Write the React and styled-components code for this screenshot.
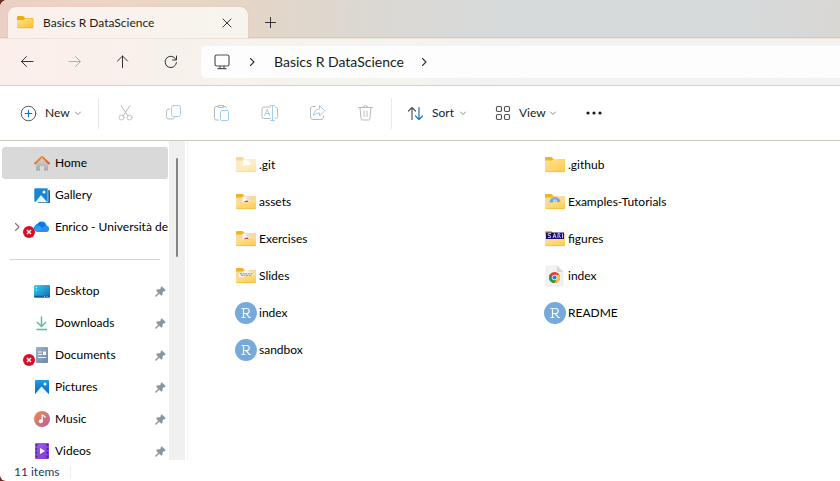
import React from "react";
import styled, { createGlobalStyle } from "styled-components";

const GlobalStyle = createGlobalStyle`
  * { box-sizing: border-box; }
  body { margin: 0; background: #6b2a1c; }
  button, input { font: inherit; color: inherit; }
`;

const Window = styled.div`
  display: flex;
  flex-direction: column;
  height: 100vh;
  overflow: hidden;
  background: #fff;
  border-radius: 7px 0 0 6px;
  color: #1b1b1b;
  font: 12px/16px Lato, "Open Sans", sans-serif;
`;

const IconButton = styled.button`
  display: flex;
  align-items: center;
  justify-content: center;
  flex: none;
  width: ${(p) => p.$w || 48}px;
  height: 32px;
  padding: 0;
  border: 0;
  background: none;
`;

/* Title bar */
const TabStrip = styled.header`
  display: flex;
  align-items: flex-end;
  flex: none;
  height: 38px;
  padding-left: 8px;
  background: linear-gradient(97deg, #eccfc4 0%, #ecd6c5 15%, #e6d5c5 27%, #dcd8d1 42%, #d6dadc 62%, #d6dada 88%, #d9d7d4 100%);
  box-shadow: inset 0 -1px #0000000d;
`;

const Tab = styled.div`
  display: flex;
  align-items: center;
  width: 240px;
  height: 31px;
  padding: 0 4px 0 9px;
  border-radius: 8px 8px 0 0;
  background: linear-gradient(90deg, #fbf1ec, #f7f4ee);
  box-shadow: 0 0 1px #0000002e;
`;

const TabTitle = styled.span`
  flex: 1;
  margin-left: 9px;
  white-space: nowrap;
`;

/* Address row */
const NavBar = styled.nav`
  display: flex;
  align-items: center;
  flex: none;
  height: 48px;
  padding-left: 3px;
  border-top: 1px solid #eee3d9;
  border-bottom: 1px solid #d2d0ce;
  background: linear-gradient(95deg, #fcefeb 0%, #f8f1eb 18%, #f5f3ed 36%, #f1f3f3 64%, #f1f3f2 88%, #f4f2f0 100%);
`;

const AddressBar = styled.div`
  display: flex;
  align-items: center;
  flex: 1;
  height: 32px;
  margin-left: 6px;
  padding-left: 13px;
  border-radius: 5px 0 0 5px;
  background: #fcfdfc;
`;

const Crumb = styled.button`
  padding: 0;
  border: 0;
  margin: 0 16px 0 18px;
  background: none;
  font-size: 14px;
  line-height: 20px;
  white-space: nowrap;
`;

const CrumbArrow = styled.span`
  display: flex;
  margin-left: ${(p) => p.$gap || 0}px;
`;

/* Commands */
const Toolbar = styled.div`
  display: flex;
  align-items: center;
  flex: none;
  height: 55px;
  border-bottom: 1px solid #cdc9bd;
`;

const Command = styled.button`
  display: flex;
  align-items: center;
  flex: none;
  width: ${(p) => p.$w}px;
  height: 32px;
  padding: 0 0 0 ${(p) => p.$pad}px;
  border: 0;
  background: none;
`;

const CommandLabel = styled.span`
  flex: none;
  width: ${(p) => p.$w}px;
  margin-left: 8px;
  text-align: left;
`;

const Separator = styled.span`
  flex: none;
  width: 1px;
  height: 31px;
  margin: 0 3px 0 1px;
  background: #e9e9e9;
`;

/* Body */
const Body = styled.div`
  display: flex;
  flex: 1;
  min-height: 0;
`;

const Sidebar = styled.aside`
  flex: none;
  width: 169px;
  padding-top: 6px;
  overflow: hidden;
  color: #000;
`;

const PlaceList = styled.ul`
  margin: 0;
  padding: 0 1px 0 2px;
  list-style: none;
`;

const Place = styled.a`
  display: flex;
  align-items: center;
  position: relative;
  height: 32px;
  padding-left: 32px;
  border-radius: 3px;
  background: ${(p) => (p.$active ? "#d9d9d9" : "transparent")};
  color: inherit;
  text-decoration: none;
`;

const PlaceName = styled.span`
  flex: 1;
  margin-left: 5px;
  white-space: nowrap;
`;

const Pin = styled.span`
  display: flex;
  margin-right: 2px;
`;

const Expander = styled.span`
  position: absolute;
  left: 11px;
  display: flex;
`;

const ErrorBadge = styled.span`
  position: absolute;
  left: 21px;
  top: 15px;
  display: flex;
`;

const Divider = styled.hr`
  margin: 16px 9px 15px 10px;
  border: 0;
  border-top: 1px solid #d2d2d2;
`;

const ScrollTrack = styled.div`
  flex: none;
  width: 16px;
  padding: 17px 7px 0;
  background: #f0f0f0;
`;

const ScrollThumb = styled.div`
  height: 99px;
  border-radius: 1px;
  background: #858585;
`;

const Files = styled.main`
  flex: 1;
  margin-left: 2px;
  padding: 5px 0 0 34px;
  border-left: 1px solid #f5f5f5;
  color: #000;
`;

const FileGrid = styled.ul`
  display: grid;
  grid-template-columns: repeat(2, 309px);
  grid-auto-rows: 37px;
  margin: 0;
  padding: 0;
  list-style: none;
`;

const FileLink = styled.a`
  display: flex;
  align-items: center;
  gap: 2px;
  height: 37px;
  padding-left: 13px;
  color: inherit;
  text-decoration: none;
`;

const StatusBar = styled.footer`
  display: flex;
  align-items: center;
  flex: none;
  height: 21px;
  padding: 2px 0 0 14px;
  color: #1e395b;
`;

const StatusMark = styled.span`
  width: 1px;
  height: 12px;
  margin-left: 10px;
  background: #eee;
`;

/* Icons */
const Line = ({ w = 16, h = w, box, color = "#333", sw = 1, children }) => (
  <svg width={w} height={h} viewBox={box || `0 0 ${w} ${h}`} fill="none" stroke={color} strokeWidth={sw} strokeLinecap="round" strokeLinejoin="round" aria-hidden="true">
    {children}
  </svg>
);

const GREY = "#b9b9b9";
const BLUE = "#9fcdf0";

const Chevron = () => <Line w={8} color="#8b8b8b"><path d="M1.500 3 4 5.500l2.500-2.500" /></Line>;
const RightChevron = ({ color = "#333" }) => <Line w={8} h={12} color={color} sw={1.1}><path d="m2.500 2.500 3.500 3.500-3.500 3.500" /></Line>;

const TabFolder = () => (
  <svg width="17" height="16" viewBox="0 0 17 16" aria-hidden="true">
    <defs><linearGradient id="tabFolder" x2="1" y2="1"><stop stopColor="#ffe28c" /><stop offset="1" stopColor="#fbc22d" /></linearGradient></defs>
    <path d="M0 2q0-1 1-1h5l2 2h7.500q1 0 1 1v4H0z" fill="#eeaa0c" />
    <path d="M0 5h6l2-1.500h7.500q1 0 1 1V12q0 1-1 1H1q-1 0-1-1z" fill="url(#tabFolder)" />
    <path d="M.5 12.800h15.500" stroke="#e4a51d" strokeWidth=".6" />
  </svg>
);

const previews = {
  page: <><path d="M7 4.500h5l2 2V12H7z" fill="#fff" /><path d="M12 4.500v2h2" stroke="#ccd5e2" strokeWidth=".7" fill="none" /></>,
  red: <><path d="M6.500 4.500H11l2.500 2.500v5h-7z" fill="#fbfafa" /><path d="M11 4.500v2.500h2.500" stroke="#b8bdc6" strokeWidth=".7" fill="none" /><path d="M7.500 10.300q2.500-2.600 5.500-1.300-2 2.500-5.500 1.300z" fill="#db3c39" /></>,
  slides: <><path d="M3 8l5-3 2-1.500L17 8v4H3z" fill="#f8f7f4" /><path d="M4 7.800h13M5 9.300h11" stroke="#8a8b8e" strokeWidth="1" strokeDasharray="2 .6" /></>,
  arc: <><path d="M4.500 10.500a5.500 5.500 0 0 1 11 0z" fill="#72a9df" /><path d="M8.500 8h2a1 1 0 0 1 0 2H9M9 8v2.500" stroke="#d9eafa" fill="none" /></>,
  sar: <><path d="M1 3.500h18v6.500H1z" fill="#160d7b" /><path d="M6 4.500H3.500L3 6l2.500.8V8.500H3M8 9l1.500-4.500L11 9M8.500 7.300h2M13 9V4.500h1.500q1 1-.3 2.200L15.500 9M17.500 4.500V9" stroke="#c9c2dd" fill="none" /></>,
};

const Folder = ({ preview, faded }) => (
  <svg width="22" height="20" viewBox="-1 0 22 20" opacity={faded ? 0.5 : 1} aria-hidden="true">
    <defs><linearGradient id="folderFront" x2="1" y2="1"><stop stopColor="#ffe394" /><stop offset="1" stopColor="#fdcb4d" /></linearGradient></defs>
    <path d="M0 3q0-1 1-1h5.500l2 2H19q1 0 1 1v7H0z" fill="#f3b321" />
    {preview ? <path d="M0 5.500h7L9 4h10q1 0 1 1v8H0z" fill="#f9dc9a" /> : null}
    {previews[preview]}
    {preview ? (
      <path d="M0 11h7.500l2-1H20v6q0 1-1 1H1q-1 0-1-1z" fill="url(#folderFront)" />
    ) : (
      <path d="M0 5.500h7L9 4h10q1 0 1 1v11q0 1-1 1H1q-1 0-1-1z" fill="url(#folderFront)" />
    )}
    <path d="M.5 16.700h19" stroke="#efb43a" strokeWidth=".6" />
  </svg>
);

const RFile = () => (
  <svg width="22" height="22" viewBox="0 0 22 22" aria-hidden="true">
    <circle cx="11" cy="11" r="11" fill="#75aadb" />
    <path d="M6.500 6.500h5.200a2.500 2.500 0 0 1 0 5H8.500M8.500 6.500v9M6.500 15.500h4M11 11.500l3.300 4h1.700" fill="none" stroke="#f5f9fd" strokeWidth="1.200" />
  </svg>
);

const ChromeFile = () => (
  <svg width="22" height="22" viewBox="0 0 22 22" aria-hidden="true">
    <path d="M3 1h11l5 5v14q0 1-1 1H3q-1 0-1-1V2q0-1 1-1z" fill="#f3f3f3" stroke="#e4e4e4" strokeWidth=".6" />
    <path d="M13 1v5q0 1 1 1h5z" fill="#d7d7d7" />
    <circle cx="10.500" cy="12.500" r="5.500" fill="#e33b2e" />
    <path d="M5.740 9.750A5.500 5.500 0 0 0 10.500 18l2.400-4.200-2.400-1.300z" fill="#229a4c" />
    <path d="M10.500 18a5.500 5.500 0 0 0 4.760-8.250H10.500v2.750l2.400 1.300z" fill="#fccb1d" />
    <circle cx="10.500" cy="12.500" r="2.700" fill="#fff" />
    <circle cx="10.500" cy="12.500" r="2.100" fill="#3079e6" />
  </svg>
);

const PinIcon = () => (
  <svg width="11" height="11" viewBox="0 0 11 11" aria-hidden="true">
    <path d="M6.800.4 10.600 4.200 9.600 5l-.8-.1-1.500 1.600v2.300l-1 .8-2.100-2.200L1.200 10.300.2 10.600.6 9.600 3.400 6.700 1.300 4.600l1-1h2.300L6.200 2.100 6 1.200z" fill="#8a949c" stroke="#8a949c" strokeWidth=".4" />
  </svg>
);

const Badge = () => (
  <svg width="12" height="12" viewBox="0 0 12 12" aria-hidden="true">
    <circle cx="6" cy="6" r="6" fill="#d50f26" />
    <path d="m4 4 4 4M8 4 4 8" stroke="#fff" strokeWidth="1.400" />
  </svg>
);

const placeIcons = {
  home: <>
    <defs><linearGradient id="roof" x2="1" y2="1"><stop stopColor="#f5a13a" /><stop offset="1" stopColor="#d95420" /></linearGradient><linearGradient id="walls" x2="0" y2="1"><stop stopColor="#d7d7d7" /><stop offset="1" stopColor="#a8a8a8" /></linearGradient></defs>
    <path d="M2 7.500 8 2l6 5.500V15q0 .8-.8.8H10V11H6v4.800H2.800Q2 15.800 2 15z" fill="url(#walls)" />
    <path d="M1 8.500 8 1.700l7 6.800" fill="none" stroke="url(#roof)" strokeWidth="1.900" strokeLinecap="round" strokeLinejoin="round" />
  </>,
  gallery: <>
    <path d="M4 3h11q1 0 1 1v11q0 1-1 1H4z" fill="#1261ab" />
    <rect width="14" height="14" rx="1" y="1" fill="#1686d4" stroke="#fff" strokeWidth=".6" />
    <path d="M1.500 15 7 8l6 7z" fill="#e9f6ff" /><circle cx="10" cy="5" r="1.500" fill="#fff" />
  </>,
  cloud: <>
    <defs><linearGradient id="cloud" x2="1" y2="1"><stop stopColor="#0b6cd8" /><stop offset=".5" stopColor="#27a7fb" /><stop offset="1" stopColor="#2373ee" /></linearGradient></defs>
    <path d="M3.600 13A3.600 3.600 0 0 1 1 6.800Q2 5 3.700 4.600a5 5 0 0 1 9 1.900A3.400 3.400 0 0 1 13 13z" fill="url(#cloud)" />
    <path d="M5 13l7-6a3.500 3.500 0 0 1 1 6z" fill="#2f8bf8" /><path d="M2 5.500Q5 5 8 9l4-2.500A5 5 0 0 0 3.700 4.600z" fill="#0c76e6" />
  </>,
  desktop: <>
    <defs><linearGradient id="desktop" x2="1" y2="1"><stop stopColor="#3bd4ed" /><stop offset="1" stopColor="#0e65b5" /></linearGradient></defs>
    <rect y="2" width="16" height="12.500" rx="1" fill="url(#desktop)" /><path d="M2 4.500h1M2 7h1" stroke="#c7f6fb" strokeWidth="1.200" /><path d="M0 12.800h16v.7q0 1-1 1H1q-1 0-1-1z" fill="#1659a0" /><path d="M10 13.500h1M12.500 13.500h1" stroke="#91bce2" />
  </>,
  downloads: <path d="M7.500 1.500v9.800M3 7l4.500 4.500L12 7M2.500 14.500h10.500" fill="none" stroke="#54bda1" strokeWidth="1.400" />,
  documents: <>
    <defs><linearGradient id="documents" x2="1" y2="1"><stop stopColor="#9fb2ca" /><stop offset="1" stopColor="#6f87a6" /></linearGradient></defs>
    <rect x="2" y="0" width="12" height="16" rx="1" fill="url(#documents)" /><path d="M4 5h4M4 7.500h4M4 10.500h8" stroke="#eff5fb" strokeWidth="1.200" /><rect x="9" y="4.500" width="3" height="3.500" fill="#fff" />
  </>,
  pictures: <>
    <defs><linearGradient id="pictures" x2="0" y2="1"><stop stopColor="#1b9de4" /><stop offset="1" stopColor="#0d69b9" /></linearGradient></defs>
    <rect x="1" y="1" width="14" height="14" rx="1" fill="url(#pictures)" /><path d="M1.500 14.500 7.500 7.500l6.800 7q-.3.500-.8.500H2z" fill="#ecf7ff" /><circle cx="11" cy="5" r="1.500" fill="#fff" />
  </>,
  music: <>
    <defs><linearGradient id="music" x2="1" y2="1"><stop stopColor="#f18b4d" /><stop offset="1" stopColor="#b4609e" /></linearGradient></defs>
    <circle cx="8" cy="8" r="8" fill="url(#music)" /><circle cx="6.700" cy="10.300" r="2" fill="#fff" /><path d="M8.200 10.500V4l2.800 1.500v1.300" fill="none" stroke="#fff" strokeWidth="1.200" />
  </>,
  videos: <>
    <defs><linearGradient id="videos" x2="1" y2="1"><stop stopColor="#a85cf1" /><stop offset="1" stopColor="#7a3bd1" /></linearGradient></defs>
    <rect x="1" width="14" height="16" rx="1" fill="url(#videos)" /><path d="M2.500 1v15M13.500 1v15" stroke="#4b1f98" strokeWidth="1.600" strokeDasharray="2 1.800" /><path d="m6 5 5 3-5 3z" fill="#fff" />
  </>,
};

const PlaceIcon = ({ name }) => <svg width="16" height="16" viewBox="0 0 16 16" aria-hidden="true">{placeIcons[name]}</svg>;

const tools = [
  ["Cut", <><path d="M4 1.500 11 12M13 1.500 6 12" stroke={GREY} /><circle cx="4.500" cy="13.500" r="2.500" stroke={BLUE} /><circle cx="12.500" cy="13.500" r="2.500" stroke={BLUE} /></>],
  ["Copy", <><path d="M4.500 5H4a2.500 2.500 0 0 0-2.500 2.500v5A2.500 2.500 0 0 0 4 15h3q2 0 2.500-1.500" stroke={GREY} /><rect x="6.500" y="1.500" width="9" height="11" rx="2.200" stroke={BLUE} /></>],
  ["Paste", <><path d="M5 2.500H3A1.500 1.500 0 0 0 1.500 4v10.500A1.500 1.500 0 0 0 3 16h2.500M10 2.500h2q1.500 0 1.500 1.500" stroke={GREY} /><rect x="5" y="1.500" width="6" height="2" rx="1" stroke={GREY} /><rect x="7.500" y="6.500" width="8" height="10" rx="1.200" stroke={BLUE} /></>],
  ["Rename", <><path d="M9.500 3H3A2 2 0 0 0 1 5v7.500a2 2 0 0 0 2 2h6.500M14 3a2 2 0 0 1 2.500 2v7.500a2 2 0 0 1-2.500 2" stroke={GREY} /><path d="M3.500 11.500 6.200 5.500l2.700 6M4.500 9.500h3.500M11.500 1.500v15M9.500 1.500h4M9.500 16.500h4" stroke={BLUE} /></>],
  ["Share", <><path d="M6 2.500H4A2.500 2.500 0 0 0 1.500 5v8A2.500 2.500 0 0 0 4 15.500h8a2.500 2.500 0 0 0 2.500-2.500v-1" stroke={GREY} /><path d="M10.500 2v3Q5 5.500 4.500 11.500q2.500-2.800 6-2.500v3l5-5z" stroke={BLUE} /></>],
  ["Delete", <path d="M1.500 3.500h14M3 3.500l1 11q.2 1.500 1.700 1.500h5.600q1.500 0 1.700-1.500l1-11M6.500 3.500q0-2 2-2t2 2M7 7v5.500M10 7v5.500" stroke={GREY} />],
];

const places = [
  { name: "Desktop", icon: "desktop" },
  { name: "Downloads", icon: "downloads" },
  { name: "Documents", icon: "documents", error: true },
  { name: "Pictures", icon: "pictures" },
  { name: "Music", icon: "music" },
  { name: "Videos", icon: "videos" },
];

const topPlaces = [
  { name: "Home", icon: "home", active: true },
  { name: "Gallery", icon: "gallery" },
  { name: "Enrico - Università de", icon: "cloud", error: true, expandable: true },
];

const files = [
  [".git", <Folder preview="page" faded />],
  [".github", <Folder />],
  ["assets", <Folder preview="red" />],
  ["Examples-Tutorials", <Folder preview="arc" />],
  ["Exercises", <Folder preview="red" />],
  ["figures", <Folder preview="sar" />],
  ["Slides", <Folder preview="slides" />],
  ["index", <ChromeFile />],
  ["index", <RFile />],
  ["README", <RFile />],
  ["sandbox", <RFile />],
];

const PlaceRow = ({ place, pinned }) => (
  <li>
    <Place href="#" $active={place.active}>
      {place.expandable && <Expander><RightChevron color="#777" /></Expander>}
      <PlaceIcon name={place.icon} />
      {place.error && <ErrorBadge><Badge /></ErrorBadge>}
      <PlaceName>{place.name}</PlaceName>
      {pinned && <Pin><PinIcon /></Pin>}
    </Place>
  </li>
);

export default function App() {
  return (
    <Window>
      <GlobalStyle />
      <TabStrip>
        <Tab>
          <TabFolder />
          <TabTitle>Basics R DataScience</TabTitle>
          <IconButton $w={34} aria-label="Close tab"><Line w={10}><path d="m1 1 8 8M9 1 1 9" /></Line></IconButton>
        </Tab>
        <IconButton $w={45} aria-label="New tab"><Line w={11}><path d="M5.500.5v10M.5 5.500h10" /></Line></IconButton>
      </TabStrip>
      <NavBar>
        <IconButton aria-label="Back"><Line><path d="M14 7.500H2.500M7.500 2.500l-5 5 5 5" /></Line></IconButton>
        <IconButton aria-label="Forward" disabled><Line color="#b6aeaa"><path d="M2 7.500h11.500M8.500 2.500l5 5-5 5" /></Line></IconButton>
        <IconButton aria-label="Up"><Line><path d="M7.500 13.500V2M2.500 7l5-5 5 5" /></Line></IconButton>
        <IconButton aria-label="Refresh"><Line><path d="M13 5.500A5.700 5.700 0 1 0 13.500 8.500M13.500 2v4h-4" /></Line></IconButton>
        <AddressBar>
          <Line w={16} color="#555" sw={1.2}><rect x="1" y="1" width="14" height="11" rx="1.800" /><path d="M6 12v2.500M10 12v2.500M4 14.700h8" /></Line>
          <CrumbArrow $gap={18}><RightChevron /></CrumbArrow>
          <Crumb>Basics R DataScience</Crumb>
          <CrumbArrow><RightChevron /></CrumbArrow>
        </AddressBar>
      </NavBar>
      <Toolbar>
        <Command $w={97} $pad={20}>
          <Line w={17} color="#555"><circle cx="8.500" cy="8.500" r="7.300" /><path d="M8.500 5.300v6.400M5.300 8.500h6.400" stroke="#0078d4" strokeWidth="1.200" /></Line>
          <CommandLabel $w={29}>New</CommandLabel><Chevron />
        </Command>
        <Separator />
        {tools.map(([label, icon]) => (
          <IconButton key={label} aria-label={label} disabled><Line w={18}>{icon}</Line></IconButton>
        ))}
        <Separator />
        <Command $w={87} $pad={12}>
          <Line w={17} sw={1.2}><path d="M5 14.500V2.500M1.500 6 5 2.500 8.500 6" stroke="#555" /><path d="M12 2.500v12M8.500 11l3.500 3.500 3.500-3.500" stroke="#1474c4" /></Line>
          <CommandLabel $w={27}>Sort</CommandLabel><Chevron />
        </Command>
        <Command $w={87} $pad={13}>
          <Line w={16} color="#555" sw={1.2}><rect x="1.500" y="1.500" width="5" height="5" rx="1.200" /><rect x="9.500" y="1.500" width="5" height="5" rx="1.200" /><rect x="1.500" y="9.500" width="5" height="5" rx="1.200" /><rect x="9.500" y="9.500" width="5" height="5" rx="1.200" /></Line>
          <CommandLabel $w={30}>View</CommandLabel><Chevron />
        </Command>
        <IconButton $w={50} aria-label="See more">
          <svg width="18" height="4" viewBox="0 0 18 4" fill="#1b1b1b" aria-hidden="true"><circle cx="3" cy="2" r="1.600" /><circle cx="9" cy="2" r="1.600" /><circle cx="15" cy="2" r="1.600" /></svg>
        </IconButton>
      </Toolbar>
      <Body>
        <Sidebar>
          <PlaceList>{topPlaces.map((p) => <PlaceRow key={p.name} place={p} />)}</PlaceList>
          <Divider />
          <PlaceList>{places.map((p) => <PlaceRow key={p.name} place={p} pinned />)}</PlaceList>
        </Sidebar>
        <ScrollTrack><ScrollThumb /></ScrollTrack>
        <Files>
          <FileGrid>
            {files.map(([name, icon], i) => (
              <li key={i}><FileLink href="#">{icon}<span>{name}</span></FileLink></li>
            ))}
          </FileGrid>
        </Files>
      </Body>
      <StatusBar>11 items<StatusMark /></StatusBar>
    </Window>
  );
}
